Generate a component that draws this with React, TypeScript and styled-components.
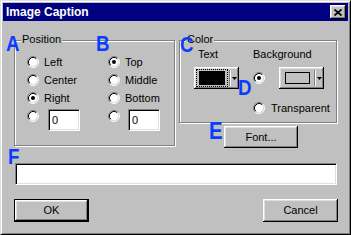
import React from "react";
import styled, { createGlobalStyle } from "styled-components";

const Global = createGlobalStyle`
  html, body { margin: 0; padding: 0; background: #c0c0c0; }
  body { font-family: "Liberation Sans", Arial, sans-serif; font-size: 11px; color: #000; }
  * { box-sizing: border-box; }
`;

const Window = styled.div`
  position: relative;
  width: 351px;
  height: 235px;
  background: #c0c0c0;
  border: 1px solid;
  border-color: #dfdfdf #000 #000 #dfdfdf;
  box-shadow: inset 1px 1px #fff, inset -1px -1px #808080;
  padding: 2px;
  display: flex;
  flex-direction: column;
`;

const TitleBar = styled.div`
  height: 18px;
  background: #000080;
  display: flex;
  align-items: center;
  justify-content: space-between;
  padding: 0 2px 0 3px;
`;

const TitleText = styled.span`
  color: #fff;
  font-weight: bold;
  font-size: 12px;
  line-height: 18px;
`;

const CloseButton = styled.div`
  width: 16px;
  height: 14px;
  background: #c0c0c0;
  box-shadow: inset -1px -1px #000, inset 1px 1px #fff, inset -2px -2px #808080, inset 2px 2px #dfdfdf;
  display: flex;
  align-items: center;
  justify-content: center;
  padding-right: 1px;
`;

const Body = styled.div`
  display: flex;
  flex-direction: column;
  padding: 19px 10px 0 11px;
`;

const TopRow = styled.div`
  display: flex;
  gap: 4px;
  align-items: flex-start;
`;

const Group = styled.div<{ $w: number; $h: number }>`
  position: relative;
  width: ${(p) => p.$w}px;
  height: ${(p) => p.$h}px;
  border: 1px solid #808080;
  box-shadow: inset 1px 1px #fff, 1px 1px #fff;
`;

const Legend = styled.span`
  position: absolute;
  top: -8px;
  left: 6px;
  padding: 0 1px;
  background: #c0c0c0;
  line-height: 13px;
`;

const PositionGrid = styled.div`
  display: grid;
  grid-template-columns: 81px auto;
  padding: 12px 0 0 12px;
`;

const Column = styled.div`
  display: flex;
  flex-direction: column;
`;

const OptionRow = styled.div`
  display: flex;
  align-items: center;
  gap: 5px;
  height: 18px;
`;

const FieldRow = styled.div`
  display: flex;
  align-items: flex-start;
  gap: 5px;
  height: 26px;
  padding-top: 3px;
`;

const Field = styled.div<{ $w: number; $mt?: number; $ml?: number }>`
  width: ${(p) => p.$w}px;
  height: 22px;
  margin-top: ${(p) => p.$mt ?? 0}px;
  margin-left: ${(p) => p.$ml ?? 0}px;
  background: #fff;
  border: 1px solid;
  border-color: #808080 #fff #fff #808080;
  box-shadow: inset 1px 1px #000, inset -1px -1px #dfdfdf;
  padding: 3px 0 0 3px;
  line-height: 14px;
`;

const RightCol = styled.div`
  display: flex;
  flex-direction: column;
`;

const ColorRow = styled.div`
  display: flex;
  padding: 7px 0 0 14px;
`;

const ColA = styled.div`
  width: 59px;
  display: flex;
  flex-direction: column;
`;

const ColB = styled.div`
  display: flex;
  flex-direction: column;
`;

const Caption = styled.span<{ $ml?: number }>`
  line-height: 13px;
  height: 13px;
  margin-left: ${(p) => p.$ml ?? 0}px;
`;

const PickerRow = styled.div`
  display: flex;
  align-items: center;
  gap: 14px;
  margin-top: 6px;
  height: 22px;
`;

const TransRow = styled.div`
  display: flex;
  align-items: center;
  gap: 6px;
  margin-top: 10px;
  height: 18px;
`;

const Dropdown = styled.div<{ $mt?: number }>`
  width: 45px;
  height: 22px;
  margin-top: ${(p) => p.$mt ?? 0}px;
  background: #c0c0c0;
  box-shadow: inset -1px -1px #000, inset 1px 1px #fff, inset -2px -2px #808080, inset 2px 2px #dfdfdf;
  display: flex;
  align-items: stretch;
  padding: 2px 2px 2px 2px;
`;

const SwatchSlot = styled.div<{ $focus?: boolean }>`
  width: 32px;
  display: flex;
  align-items: center;
  justify-content: center;
  border: 1px dotted ${(p) => (p.$focus ? "#000" : "transparent")};
  padding: 1px 2px;
`;

const Swatch = styled.div<{ $color: string; $outlined?: boolean }>`
  flex: 1;
  align-self: stretch;
  background: ${(p) => p.$color};
  border: ${(p) => (p.$outlined ? "1px solid #000" : "none")};
  margin: ${(p) => (p.$outlined ? "1px 0 1px 1px" : "0")};
`;

const Separator = styled.div`
  width: 2px;
  margin: 1px 0 1px 1px;
  border-left: 1px solid #808080;
  border-right: 1px solid #fff;
`;

const ArrowSlot = styled.div`
  flex: 1;
  display: flex;
  align-items: center;
  justify-content: center;
`;

const PushButton = styled.div<{ $default?: boolean; $w: number; $h: number; $mt?: number; $ml?: number }>`
  width: ${(p) => p.$w}px;
  height: ${(p) => p.$h}px;
  margin-top: ${(p) => p.$mt ?? 0}px;
  margin-left: ${(p) => p.$ml ?? 0}px;
  background: #c0c0c0;
  display: flex;
  align-items: center;
  justify-content: center;
  border: ${(p) => (p.$default ? "1px solid #000" : "none")};
  box-shadow: inset -1px -1px #000, inset 1px 1px #fff, inset -2px -2px #808080, inset 2px 2px #dfdfdf;
  line-height: 13px;
`;

const CaptionField = styled(Field)`
  margin-top: 15px;
  margin-left: 1px;
`;

const ButtonRow = styled.div`
  display: flex;
  justify-content: space-between;
  margin-top: 14px;
`;

const Mark = styled.span<{ $x: number; $y: number; $size?: number }>`
  position: absolute;
  left: ${(p) => p.$x}px;
  top: ${(p) => p.$y}px;
  font-family: "Liberation Sans", Arial, sans-serif;
  font-weight: bold;
  font-size: ${(p) => p.$size ?? 22}px;
  line-height: 22px;
  color: #0a3cff;
  transform: scaleX(0.85);
  transform-origin: left top;
`;

function Radio({ checked }: { checked?: boolean }) {
  return (
    <svg width="12" height="12" viewBox="0 0 12 12" style={{ flex: "none" }}>
      <circle cx="6" cy="6" r="4.5" fill="#fff" />
      <path d="M2.11 9.89 A5.5 5.5 0 0 1 9.89 2.11" stroke="#808080" fill="none" strokeWidth="1" />
      <path d="M9.89 2.11 A5.5 5.5 0 0 1 2.11 9.89" stroke="#fff" fill="none" strokeWidth="1" />
      <path d="M2.82 9.18 A4.5 4.5 0 0 1 9.18 2.82" stroke="#000" fill="none" strokeWidth="1" />
      <path d="M9.18 2.82 A4.5 4.5 0 0 1 2.82 9.18" stroke="#dfdfdf" fill="none" strokeWidth="1" />
      {checked && <circle cx="6" cy="6" r="2" fill="#000" />}
    </svg>
  );
}

function Arrow() {
  return (
    <svg width="5" height="3" viewBox="0 0 5 3">
      <polygon points="0,0 5,0 2.5,3" fill="#000" />
    </svg>
  );
}

export default function App() {
  return (
    <>
      <Global />
      <Window>
        <TitleBar>
          <TitleText>Image Caption</TitleText>
          <CloseButton>
            <svg width="8" height="7" viewBox="0 0 8 7">
              <path d="M0.5 0.5 L7.5 6.5 M7.5 0.5 L0.5 6.5" stroke="#000" strokeWidth="1.7" />
            </svg>
          </CloseButton>
        </TitleBar>
        <Body>
          <TopRow>
            <Group $w={161} $h={106}>
              <Legend>Position</Legend>
              <PositionGrid>
                <Column>
                  <OptionRow><Radio /><span>Left</span></OptionRow>
                  <OptionRow><Radio /><span>Center</span></OptionRow>
                  <OptionRow><Radio checked /><span>Right</span></OptionRow>
                  <FieldRow><Radio /><Field $w={32} $mt={-1} $ml={4}>0</Field></FieldRow>
                </Column>
                <Column>
                  <OptionRow><Radio checked /><span>Top</span></OptionRow>
                  <OptionRow><Radio /><span>Middle</span></OptionRow>
                  <OptionRow><Radio /><span>Bottom</span></OptionRow>
                  <FieldRow><Radio /><Field $w={32} $mt={-1} $ml={3}>0</Field></FieldRow>
                </Column>
              </PositionGrid>
            </Group>
            <RightCol>
              <Group $w={158} $h={83}>
                <Legend>Color</Legend>
                <ColorRow>
                  <ColA>
                    <Caption $ml={4}>Text</Caption>
                    <Dropdown $mt={6}>
                      <SwatchSlot $focus>
                        <Swatch $color="#000" />
                      </SwatchSlot>
                      <Separator />
                      <ArrowSlot><Arrow /></ArrowSlot>
                    </Dropdown>
                  </ColA>
                  <ColB>
                    <Caption>Background</Caption>
                    <PickerRow>
                      <Radio checked />
                      <Dropdown>
                        <SwatchSlot>
                          <Swatch $color="#c0c0c0" $outlined />
                        </SwatchSlot>
                        <Separator />
                        <ArrowSlot><Arrow /></ArrowSlot>
                      </Dropdown>
                    </PickerRow>
                    <TransRow>
                      <Radio />
                      <span>Transparent</span>
                    </TransRow>
                  </ColB>
                </ColorRow>
              </Group>
              <PushButton $w={74} $h={22} $mt={3} $ml={45}>Font...</PushButton>
            </RightCol>
          </TopRow>
          <CaptionField $w={322} />
          <ButtonRow>
            <PushButton $default $w={75} $h={23}>OK</PushButton>
            <PushButton $w={75} $h={23}>Cancel</PushButton>
          </ButtonRow>
        </Body>
        <Mark $x={5} $y={32}>A</Mark>
        <Mark $x={95} $y={32}>B</Mark>
        <Mark $x={179} $y={33}>C</Mark>
        <Mark $x={237} $y={76}>D</Mark>
        <Mark $x={208} $y={119} $size={24}>E</Mark>
        <Mark $x={7} $y={145}>F</Mark>
      </Window>
    </>
  );
}
